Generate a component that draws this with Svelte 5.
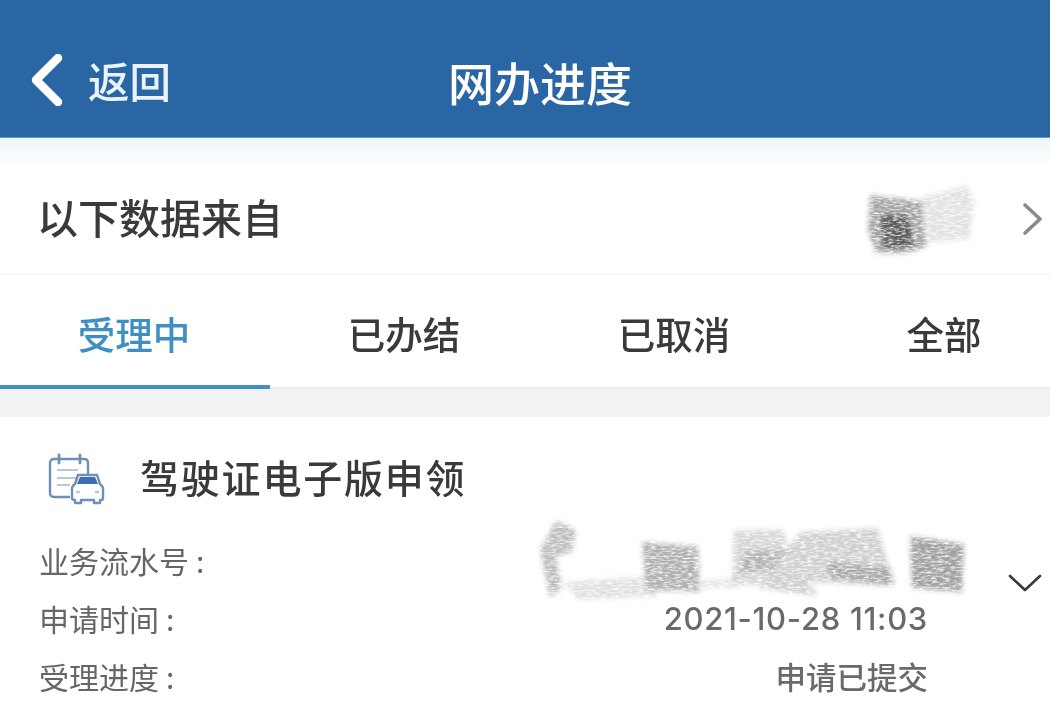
<script>
  const tabs = ['受理中', '已办结', '已取消', '全部'];
  let active = 0;

  const rows = [
    { label: '业务流水号', value: '' },
    { label: '申请时间', value: '2021-10-28 11:03' },
    { label: '受理进度', value: '申请已提交' }
  ];
</script>

<div class="page">
  <header class="topbar">
    <div class="back">
      <svg width="34" height="52" viewBox="0 0 34 52">
        <path d="M28 4 L6 26 L28 48" fill="none" stroke="#fff" stroke-width="8.5" stroke-linecap="round" stroke-linejoin="round" />
      </svg>
      <span>返回</span>
    </div>
    <h1>网办进度</h1>
  </header>

  <div class="fade"></div>

  <div class="source">
    <span>以下数据来自</span>
    <svg class="scribble source-scribble" width="130" height="90" viewBox="0 0 130 90">
      <defs>
        <filter id="pencil" x="-10%" y="-15%" width="120%" height="130%">
          <feGaussianBlur in="SourceGraphic" stdDeviation="2.4" result="soft" />
          <feTurbulence type="fractalNoise" baseFrequency="0.16 0.55" numOctaves="3" seed="7" result="n" />
          <feColorMatrix in="n" type="matrix" values="0 0 0 0 0  0 0 0 0 0  0 0 0 0 0  0 0 0 -2.2 1.9" result="grain" />
          <feComposite in="soft" in2="grain" operator="in" />
          <feGaussianBlur stdDeviation="0.6" />
        </filter>
      </defs>
      <g filter="url(#pencil)">
        <path d="M66 26 L112 14 L118 30 L114 68 L70 72 Z" fill="#e2e2e2" />
        <path d="M14 24 L66 30 L70 76 L50 82 L20 82 L12 60 Z" fill="#a4a4a4" />
        <path d="M24 44 L52 44 L58 76 L28 78 Z" fill="#5a5a5a" />
      </g>
    </svg>
    <svg class="more" width="24" height="36" viewBox="0 0 24 36">
      <path d="M4 4 L19 18 L4 32" fill="none" stroke="#8a8a8a" stroke-width="3.6" stroke-linecap="round" stroke-linejoin="round" />
    </svg>
  </div>

  <nav class="tabs">
    {#each tabs as tab, i}
      <div class="tab" class:active={i === active}>{tab}</div>
    {/each}
  </nav>

  <div class="gap"></div>

  <section class="card">
    <div class="card-title">
      <svg width="60" height="52" viewBox="0 0 60 52">
        <path d="M6 6 H36 Q40 6 40 10 V24 M22 44 H6 Q2 44 2 40 V10 Q2 6 6 6" fill="none" stroke="#6f8fb8" stroke-width="2.4" />
        <path d="M11 2 V10 M32 2 V10" stroke="#6f8fb8" stroke-width="2.8" stroke-linecap="round" />
        <path d="M9 17 H30 M9 25 H28 M9 32 H22" stroke="#b9c6d8" stroke-width="2.2" />
        <path d="M30 22 H49 L52 31 Q55 33 55 36 V45 Q55 47 53 47 H52 V50 H46 V47 H33 V50 H27 V47 Q24 47 24 45 V36 Q24 33 27 31 Z" fill="#fff" stroke="#6f8fb8" stroke-width="2.4" stroke-linejoin="round" />
        <path d="M32 24 H47 L50 31 H29 Z" fill="#3f6db5" />
        <path d="M28 39 H32 M47 39 H51" stroke="#b9c6d8" stroke-width="2.6" />
      </svg>
      <h2>驾驶证电子版申领</h2>
    </div>

    <div class="details">
      <div class="rows">
        {#each rows as row}
          <div class="row">
            <span class="label">{row.label}<span class="colon">:</span></span>
            <span class="value" class:date={row.value.startsWith('2021')}>{row.value}</span>
          </div>
        {/each}
      </div>
      <svg class="expand" width="34" height="20" viewBox="0 0 34 20">
        <path d="M2 3 L17 17 L32 3" fill="none" stroke="#3a3a3a" stroke-width="2.6" stroke-linecap="round" stroke-linejoin="round" />
      </svg>
      <svg class="scribble serial-scribble" width="430" height="90" viewBox="0 0 430 90">
        <g filter="url(#pencil)">
          <path d="M18 4 L38 14 L34 36 L18 40 L24 72 L12 82 L2 34 Z" fill="#bdbdbd" />
          <path d="M26 66 L110 60 L122 80 L40 84 Z" fill="#e0e0e0" />
          <path d="M104 26 L160 30 L162 76 L108 74 Z" fill="#b0b0b0" />
          <path d="M160 64 L200 62 L200 72 L160 72 Z" fill="#e6e6e6" />
          <path d="M196 14 L246 14 L256 66 L194 70 Z" fill="#d6d6d6" />
          <path d="M208 34 L250 34 L250 52 L200 58 Z" fill="#b4b4b4" />
          <path d="M262 16 L340 12 L356 70 L270 66 L280 80 L220 72 Z" fill="#cfcfcf" />
          <path d="M290 46 L352 52 L356 70 L292 62 Z" fill="#a8a8a8" />
          <path d="M372 20 L426 28 L424 76 L374 72 Z" fill="#a0a0a0" />
        </g>
      </svg>
    </div>
  </section>
</div>

<style>
  :global(body) {
    margin: 0;
    background: #fff;
  }

  .page {
    width: 1050px;
    height: 727px;
    overflow: hidden;
    font-family: "Noto Sans CJK SC", "Liberation Sans", sans-serif;
    color: #3a3a3a;
  }

  .topbar {
    position: relative;
    height: 138px;
    background: #2b66a4;
    border-bottom: 1px solid #5b9bcb;
    box-sizing: border-box;
    color: #fff;
    display: flex;
    align-items: center;
    justify-content: center;
    filter: blur(0.5px);
  }

  .back {
    position: absolute;
    left: 30px;
    top: 54px;
    display: flex;
    align-items: center;
    gap: 24px;
    font-size: 41.5px;
    font-weight: 500;
    line-height: 52px;
    color: #eaf3f9;
  }

  h1 {
    margin: 0;
    padding-left: 30px;
    font-size: 46px;
    font-weight: 500;
    line-height: 52px;
    transform: translateY(12px);
  }

  .fade {
    height: 27px;
    background: linear-gradient(#eff6f9, #fdfefe);
  }

  .source {
    position: relative;
    height: 110px;
    padding: 0 5px 0 37px;
    display: flex;
    align-items: center;
    justify-content: space-between;
    font-size: 41px;
    font-weight: 500;
    border-bottom: 2px solid #f6f6f6;
    box-sizing: border-box;
  }

  .source > span {
    filter: blur(0.4px);
    transform: translateY(-3px);
  }

  .scribble {
    position: absolute;
  }

  .source-scribble {
    left: 856px;
    top: 6px;
  }

  .tabs {
    display: grid;
    grid-template-columns: repeat(4, 270px);
    height: 114px;
    border-bottom: 2px solid #ececee;
    box-sizing: border-box;
    filter: blur(0.4px);
  }

  .tab {
    display: flex;
    align-items: center;
    justify-content: center;
    font-size: 37.5px;
    font-weight: 500;
    height: 114px;
    box-sizing: border-box;
    padding: 1px 2px 0 0;
    color: #3a3a3a;
  }

  .tab.active {
    color: #3d8fc6;
    border-bottom: 4px solid #3d8fc6;
    padding-top: 5px;
  }

  .gap {
    height: 28px;
    background: #f2f3f5;
  }

  .card {
    background: #fff;
    padding: 33px 0 0 40px;
  }

  .card-title {
    display: flex;
    align-items: center;
    gap: 40px;
    height: 52px;
  }

  .card-title svg {
    margin-left: 8px;
    margin-right: -8px;
    transform: translateY(3px);
  }

  h2 {
    margin: 0;
    font-size: 39px;
    font-weight: 500;
    letter-spacing: 1.8px;
    filter: blur(0.4px);
  }

  .details {
    position: relative;
    margin-top: 37px;
    padding-right: 122px;
  }

  .rows {
    display: flex;
    flex-direction: column;
    gap: 16px;
    filter: blur(0.3px);
  }

  .row {
    display: flex;
    justify-content: space-between;
    align-items: center;
    height: 42px;
    font-size: 30px;
    color: #666;
  }

  .label {
    transform: translateX(-1px);
  }

  .colon {
    padding-left: 7px;
  }

  .value {
    font-size: 30.5px;
    font-weight: 500;
    color: #6a6a6a;
  }

  .value.date {
    font-family: "Inter", "Liberation Sans", sans-serif;
    font-size: 31px;
    letter-spacing: 0.7px;
  }

  .expand {
    position: absolute;
    right: 8px;
    top: 34px;
  }

  .serial-scribble {
    position: absolute;
    left: 498px;
    top: -23px;
  }
</style>
